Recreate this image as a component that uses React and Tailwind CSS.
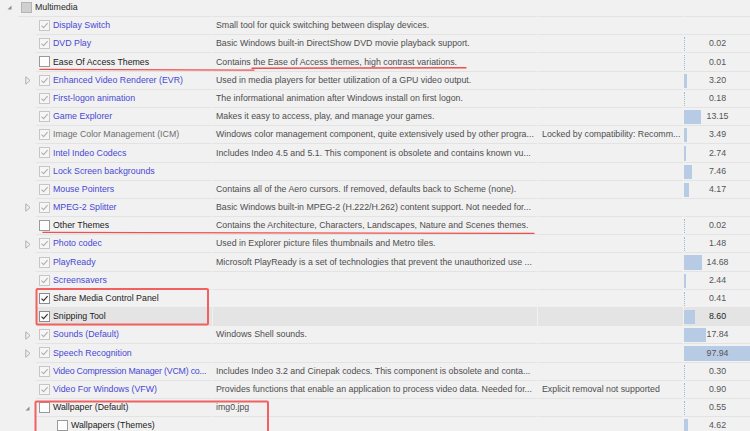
import React from "react";

const rows = [
  { level: 0, name: "Multimedia", kind: "root", check: "partial", arrow: "open" },
  { name: "Display Switch", kind: "blue", check: "grey", desc: "Small tool for quick switching between display devices." },
  { name: "DVD Play", kind: "blue", check: "grey", desc: "Basic Windows built-in DirectShow DVD movie playback support.", size: "0.02", bar: 0 },
  { name: "Ease Of Access Themes", kind: "black", check: "none", desc: "Contains the Ease of Access themes, high contrast variations.", size: "0.01", bar: 0 },
  { name: "Enhanced Video Renderer (EVR)", kind: "blue", check: "grey", arrow: "closed", desc: "Used in media players for better utilization of a GPU video output.", size: "3.20", bar: 3 },
  { name: "First-logon animation", kind: "blue", check: "grey", desc: "The informational animation after Windows install on first logon.", size: "0.18", bar: 0 },
  { name: "Game Explorer", kind: "blue", check: "grey", desc: "Makes it easy to access, play, and manage your games.", size: "13.15", bar: 17 },
  { name: "Image Color Management (ICM)", kind: "grey", check: "grey", desc: "Windows color management component, quite extensively used by other progra...", rem: "Locked by compatibility: Recomm...", size: "3.49", bar: 3 },
  { name: "Intel Indeo Codecs", kind: "blue", check: "grey", desc: "Includes Indeo 4.5 and 5.1. This component is obsolete and contains known vu...", size: "2.74", bar: 2 },
  { name: "Lock Screen backgrounds", kind: "blue", check: "grey", desc: "", size: "7.46", bar: 8 },
  { name: "Mouse Pointers", kind: "blue", check: "grey", desc: "Contains all of the Aero cursors. If removed, defaults back to Scheme (none).", size: "4.17", bar: 5 },
  { name: "MPEG-2 Splitter", kind: "blue", check: "grey", arrow: "closed", desc: "Basic Windows built-in MPEG-2 (H.222/H.262) content support. Not needed for..." },
  { name: "Other Themes", kind: "black", check: "none", desc: "Contains the Architecture, Characters, Landscapes, Nature and Scenes themes.", size: "0.02", bar: 0 },
  { name: "Photo codec", kind: "blue", check: "grey", arrow: "closed", desc: "Used in Explorer picture files thumbnails and Metro tiles.", size: "1.48", bar: 0 },
  { name: "PlayReady", kind: "blue", check: "grey", desc: "Microsoft PlayReady is a set of technologies that prevent the unauthorized use ...", size: "14.68", bar: 18 },
  { name: "Screensavers", kind: "blue", check: "grey", desc: "", size: "2.44", bar: 2 },
  { name: "Share Media Control Panel", kind: "black", check: "dark", desc: "", size: "0.41", bar: 0 },
  { name: "Snipping Tool", kind: "black", check: "dark", desc: "", size: "8.60", bar: 11, selected: true },
  { name: "Sounds (Default)", kind: "blue", check: "grey", arrow: "closed", desc: "Windows Shell sounds.", size: "17.84", bar: 22 },
  { name: "Speech Recognition", kind: "blue", check: "grey", arrow: "closed", desc: "", size: "97.94", bar: 66 },
  { name: "Video Compression Manager (VCM) co...", kind: "blue", check: "grey", tight: true, desc: "Includes Indeo 3.2 and Cinepak codecs. This component is obsolete and conta...", size: "0.30", bar: 0 },
  { name: "Video For Windows (VFW)", kind: "blue", check: "grey", desc: "Provides functions that enable an application to process video data. Needed for...", rem: "Explicit removal not supported", size: "0.90", bar: 0 },
  { name: "Wallpaper (Default)", kind: "black", check: "none", arrow: "open", desc: "img0.jpg", size: "0.55", bar: 0 },
  { level: 2, name: "Wallpapers (Themes)", kind: "black", check: "none", desc: "", size: "4.62", bar: 4 },
];

const nameColor = {
  root: "text-[#2a2a2a]",
  blue: "text-[#4848d4]",
  black: "text-[#1c1c1c]",
  grey: "text-[#6e6e6e]",
};

function CheckBox({ state }) {
  if (state === "partial") {
    return (
      <span className="flex h-[11px] w-[11px] shrink-0 items-center justify-center border border-[#b4b4b4] bg-[#d0d0d0]" />
    );
  }
  const box =
    state === "dark"
      ? "border-[#8c8c8c] bg-[#fafafa]"
      : state === "grey"
      ? "border-[#c6c6c6] bg-[#f6f6f6]"
      : "border-[#9a9a9a] bg-[#fdfdfd]";
  const stroke = state === "dark" ? "#2e2e2e" : "#b0b0b0";
  return (
    <span className={`flex h-[11px] w-[11px] shrink-0 items-center justify-center border ${box}`}>
      {state !== "none" && (
        <svg width="9" height="9" viewBox="0 0 9 9">
          <path d="M1.5 4.6 L3.6 6.7 L7.6 2.2" fill="none" stroke={stroke} strokeWidth="1.1" />
        </svg>
      )}
    </span>
  );
}

function Arrow({ type }) {
  if (type === "open") {
    return (
      <svg width="5" height="5" viewBox="0 0 5 5" className="shrink-0">
        <path d="M4.5 0.5 L4.5 4.5 L0.5 4.5 Z" fill="#8e8e8e" />
      </svg>
    );
  }
  if (type === "closed") {
    return (
      <svg width="6" height="9" viewBox="0 0 6 9" className="shrink-0">
        <path d="M0.8 0.8 L5 4.5 L0.8 8.2 Z" fill="none" stroke="#a8a8a8" strokeWidth="0.9" />
      </svg>
    );
  }
  return null;
}

function Row({ r }) {
  const level = r.level ?? 1;
  const indent = level === 0 ? "w-[18px] pl-[7px]" : level === 1 ? "w-[36px] pl-[25px]" : "w-[54px]";
  const cellBg = r.selected ? "bg-[#e4e4e4]" : "";
  const cell = `h-full border-b border-[#e3e3e3] ${cellBg}`;
  return (
    <div className="flex h-[18.2px]">
      <div className={`flex h-full shrink-0 items-center ${indent}`}>
        {r.arrow && <Arrow type={r.arrow} />}
      </div>
      <div className="flex h-full min-w-0 flex-1 gap-px">
        <div className={`flex min-w-0 flex-1 items-center gap-[3px] pl-[3px] ${cell}`}>
          <CheckBox state={r.check} />
          <span className={`whitespace-nowrap ${r.tight ? "tracking-[-0.2px]" : ""} ${nameColor[r.kind]}`}>{r.name}</span>
        </div>
        <div className={`flex w-[324px] shrink-0 items-center overflow-hidden pl-[3px] ${cell}`}>
          <span className="whitespace-nowrap text-[#4e4e4e]">{r.desc}</span>
        </div>
        <div className={`flex w-[145px] shrink-0 items-center overflow-hidden pl-[4px] ${cell}`}>
          <span className="whitespace-nowrap text-[#4e4e4e]">{r.rem}</span>
        </div>
        <div className={`relative flex w-[66px] shrink-0 items-center justify-center ${cell}`}>
          {r.size && (
            r.bar > 0 ? (
              <span
                className="absolute left-0 top-[2px] bottom-[1px] bg-[#b8cbe5]"
                style={{ width: r.bar + "px" }}
              />
            ) : (
              <span className="absolute left-0 top-[2px] bottom-[1px] border-l border-dotted border-[#9fb8da]" />
            )
          )}
          <span className={`relative pl-[1px] ${r.selected ? "text-[#1e1e1e]" : "text-[#555555]"}`}>{r.size}</span>
        </div>
      </div>
    </div>
  );
}

export default function App() {
  return (
    <div className="relative h-[431px] w-[750px] overflow-hidden bg-[#f1f1f1] font-['Liberation_Sans',Arial,sans-serif] text-[8.8px] leading-none">
      <div className="-mt-[1.2px] flex flex-col">
        {rows.map((r, i) => (
          <Row key={i} r={r} />
        ))}
      </div>
      <svg className="pointer-events-none absolute left-0 top-0" width="750" height="431" viewBox="0 0 750 431">
        <g fill="none" stroke="#ee4f4f" strokeLinecap="round">
          <path d="M40 69.4 L254 70.1" strokeWidth="1.4" />
          <path d="M252 68.3 L466 67.8" strokeWidth="1.4" />
          <path d="M43 232.4 L534 233.4" strokeWidth="1.4" />
        </g>
        <g fill="none" stroke="#f26060" strokeWidth="2">
          <rect x="36.5" y="289" width="171.5" height="35.5" rx="1" />
          <rect x="35.5" y="401.5" width="232.5" height="40" rx="1" />
        </g>
      </svg>
    </div>
  );
}
